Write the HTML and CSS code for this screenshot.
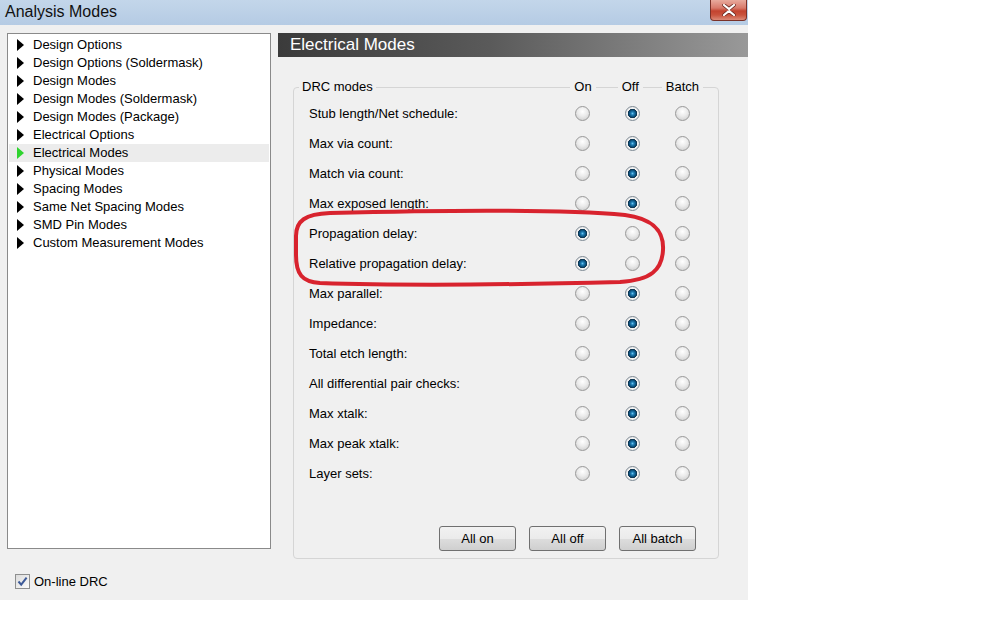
FILE: index.html
```html
<!DOCTYPE html>
<html>

<head>
  <meta charset="utf-8" />
  <title>Analysis Modes</title>
  <link rel="stylesheet" href="styles.css">
</head>

<body>
  <div class="window">
    <div class="titlebar">
      <span class="title">Analysis Modes</span>
      <div class="close-btn">
        <svg width="16" height="12" viewBox="0 0 16 12">
          <path d="M3 1 L8 5 L13 1 M3 11 L8 7 L13 11" fill="none" stroke="#6a2a22" stroke-width="3.6" stroke-linecap="round" />
          <path d="M3 1 L8 5 L13 1 M3 11 L8 7 L13 11" fill="none" stroke="#ffffff" stroke-width="2.2" stroke-linecap="round" />
        </svg>
      </div>
    </div>

    <div class="client">
      <div class="left-col">
        <ul class="tree">
          <li class="tree-item"><span class="arrow"></span>Design Options</li>
          <li class="tree-item"><span class="arrow"></span>Design Options (Soldermask)</li>
          <li class="tree-item"><span class="arrow"></span>Design Modes</li>
          <li class="tree-item"><span class="arrow"></span>Design Modes (Soldermask)</li>
          <li class="tree-item"><span class="arrow"></span>Design Modes (Package)</li>
          <li class="tree-item"><span class="arrow"></span>Electrical Options</li>
          <li class="tree-item selected"><span class="arrow"></span>Electrical Modes</li>
          <li class="tree-item"><span class="arrow"></span>Physical Modes</li>
          <li class="tree-item"><span class="arrow"></span>Spacing Modes</li>
          <li class="tree-item"><span class="arrow"></span>Same Net Spacing Modes</li>
          <li class="tree-item"><span class="arrow"></span>SMD Pin Modes</li>
          <li class="tree-item"><span class="arrow"></span>Custom Measurement Modes</li>
        </ul>
        <label class="online">
          <span class="checkbox">
            <svg width="11" height="11" viewBox="0 0 11 11">
              <path d="M1.5 5.5 L4.2 8.6 L9.6 1.6" fill="none" stroke="#3d5a98" stroke-width="2" />
            </svg>
          </span>
          On-line DRC
        </label>
      </div>

      <div class="right-col">
        <div class="page-head">Electrical Modes</div>
        <div class="group">
          <div class="group-head">
            <span class="head-label first">DRC modes</span>
            <span class="head-space"></span>
            <span class="head-label">On</span>
            <span class="head-label off">Off</span>
            <span class="head-label batch">Batch</span>
          </div>

          <div class="rows" id="rows"></div>

          <div class="btn-row">
            <button class="win-btn">All on</button>
            <button class="win-btn">All off</button>
            <button class="win-btn">All batch</button>
          </div>
        </div>
      </div>
    </div>
  </div>

  <svg class="markup" width="1008" height="630" viewBox="0 0 1008 630">
    <path d="M330 213 C450 210, 570 210, 625 215 C655 219, 664 232, 663 250 C662 270, 651 280, 620 282 C500 285, 380 285, 320 283 C302 282, 296 274, 296 255 L296 236 C296 221, 305 214, 330 213 Z"
      fill="none" stroke="#d8232e" stroke-width="4" />
  </svg>

  <script>
    // 0 = On, 1 = Off
    const modes = [
      ['Stub length/Net schedule:', 1],
      ['Max via count:', 1],
      ['Match via count:', 1],
      ['Max exposed length:', 1],
      ['Propagation delay:', 0],
      ['Relative propagation delay:', 0],
      ['Max parallel:', 1],
      ['Impedance:', 1],
      ['Total etch length:', 1],
      ['All differential pair checks:', 1],
      ['Max xtalk:', 1],
      ['Max peak xtalk:', 1],
      ['Layer sets:', 1]
    ];

    const rows = document.getElementById('rows');
    modes.forEach(([name, sel]) => {
      const label = document.createElement('div');
      label.className = 'row-label';
      label.textContent = name;
      rows.appendChild(label);
      for (let i = 0; i < 3; i++) {
        const cell = document.createElement('div');
        cell.className = 'radio-cell';
        const radio = document.createElement('span');
        radio.className = i === sel ? 'radio checked' : 'radio';
        cell.appendChild(radio);
        rows.appendChild(cell);
      }
    });
  </script>
</body>

</html>
```

FILE: styles.css
```css
body {
  margin: 0;
  background-color: #ffffff;
  font-family: 'Liberation Sans', Arial, sans-serif;
  font-size: 13px;
  color: #000000;
}

.window {
  width: 748px;
  height: 600px;
  background-color: #f0f0f0;
  display: flex;
  flex-direction: column;
}

.titlebar {
  height: 25px;
  background: linear-gradient(#c3d6ea, #b5cbe4);
  display: flex;
  align-items: flex-start;
  justify-content: space-between;
}

.title {
  font-size: 16px;
  line-height: 24px;
  margin-left: 5px;
  color: #111111;
}

.close-btn {
  width: 35px;
  height: 20px;
  margin-right: 1px;
  border: 1px solid #7a3128;
  border-top: none;
  border-radius: 0 0 4px 4px;
  background: linear-gradient(#e8aa9d 0%, #d8796a 40%, #c3432f 55%, #c9533d 75%, #dc8a78 100%);
  display: flex;
  align-items: center;
  justify-content: center;
}

.client {
  display: flex;
  padding-top: 8px;
}

.left-col {
  width: 264px;
  margin-left: 7px;
}

.tree {
  list-style: none;
  margin: 0;
  padding: 2px 1px 0;
  height: 516px;
  box-sizing: border-box;
  background-color: #ffffff;
  border: 1px solid #8a8a8a;
}

.tree-item {
  height: 18px;
  line-height: 18px;
  display: flex;
  align-items: center;
  white-space: nowrap;
}

.tree-item.selected {
  background-color: #ececec;
}

.arrow {
  width: 0;
  height: 0;
  margin: 0 9px 0 8px;
  border-left: 7px solid #000000;
  border-top: 6px solid transparent;
  border-bottom: 6px solid transparent;
}

.selected .arrow {
  border-left-color: #2fd42f;
}

.online {
  display: flex;
  align-items: center;
  margin: 24px 0 0 8px;
  height: 16px;
}

.checkbox {
  width: 13px;
  height: 13px;
  margin-right: 4px;
  border: 1px solid #8e8f8f;
  background: linear-gradient(135deg, #dcdcdc, #fbfbfb);
  display: flex;
  align-items: center;
  justify-content: center;
}

.right-col {
  width: 470px;
  margin-left: 7px;
}

.page-head {
  height: 24px;
  line-height: 24px;
  padding-left: 12px;
  font-size: 17px;
  color: #ffffff;
  background: linear-gradient(90deg, #3b3b3b 0%, #5a5a5a 45%, #999999 100%);
}

.group {
  width: 426px;
  margin: 30px 0 0 15px;
  box-sizing: border-box;
  border: 1px solid #d5d5d5;
  border-radius: 4px;
  padding-bottom: 7px;
}

.group-head {
  display: flex;
  height: 16px;
  line-height: 16px;
  margin-top: -9px;
}

.head-label {
  background-color: #f0f0f0;
  padding: 0 4px;
}

.head-label.first {
  margin-left: 5px;
  padding: 0 3px;
}

.head-space {
  flex: 1;
}

.head-label.off {
  margin-left: 22px;
}

.head-label.batch {
  margin-left: 19px;
  margin-right: 15px;
}

.rows {
  display: grid;
  grid-template-columns: 1fr 50px 50px 50px;
  grid-auto-rows: 30px;
  padding: 0 11px 0 14px;
  margin-top: 3px;
}

.row-label {
  display: flex;
  align-items: center;
  padding-left: 1px;
}

.radio-cell {
  display: flex;
  align-items: center;
  justify-content: center;
}

.radio {
  width: 13px;
  height: 13px;
  border-radius: 50%;
  border: 1px solid #999999;
  background: radial-gradient(circle at 50% 35%, #ffffff 0, #ebebeb 45%, #c8c8c8 100%);
}

.radio.checked {
  border-color: #7e8a94;
  background: radial-gradient(circle at 50% 50%, #6cc4ee 0, #1f7fb7 1.5px, #0c4d78 3.4px, #0a2e47 4.4px, #f2f2f2 5px, #e0e0e0 100%);
}

.btn-row {
  display: flex;
  justify-content: flex-end;
  gap: 13px;
  margin-top: 38px;
  padding-right: 22px;
}

.win-btn {
  width: 77px;
  height: 25px;
  padding: 0;
  font-family: 'Liberation Sans', Arial, sans-serif;
  font-size: 13px;
  color: #000000;
  border: 1px solid #707070;
  border-radius: 3px;
  background: linear-gradient(#f2f2f2 0%, #ebebeb 50%, #dddddd 51%, #cfcfcf 100%);
}

.markup {
  position: absolute;
  left: 0;
  top: 0;
  pointer-events: none;
}
```
